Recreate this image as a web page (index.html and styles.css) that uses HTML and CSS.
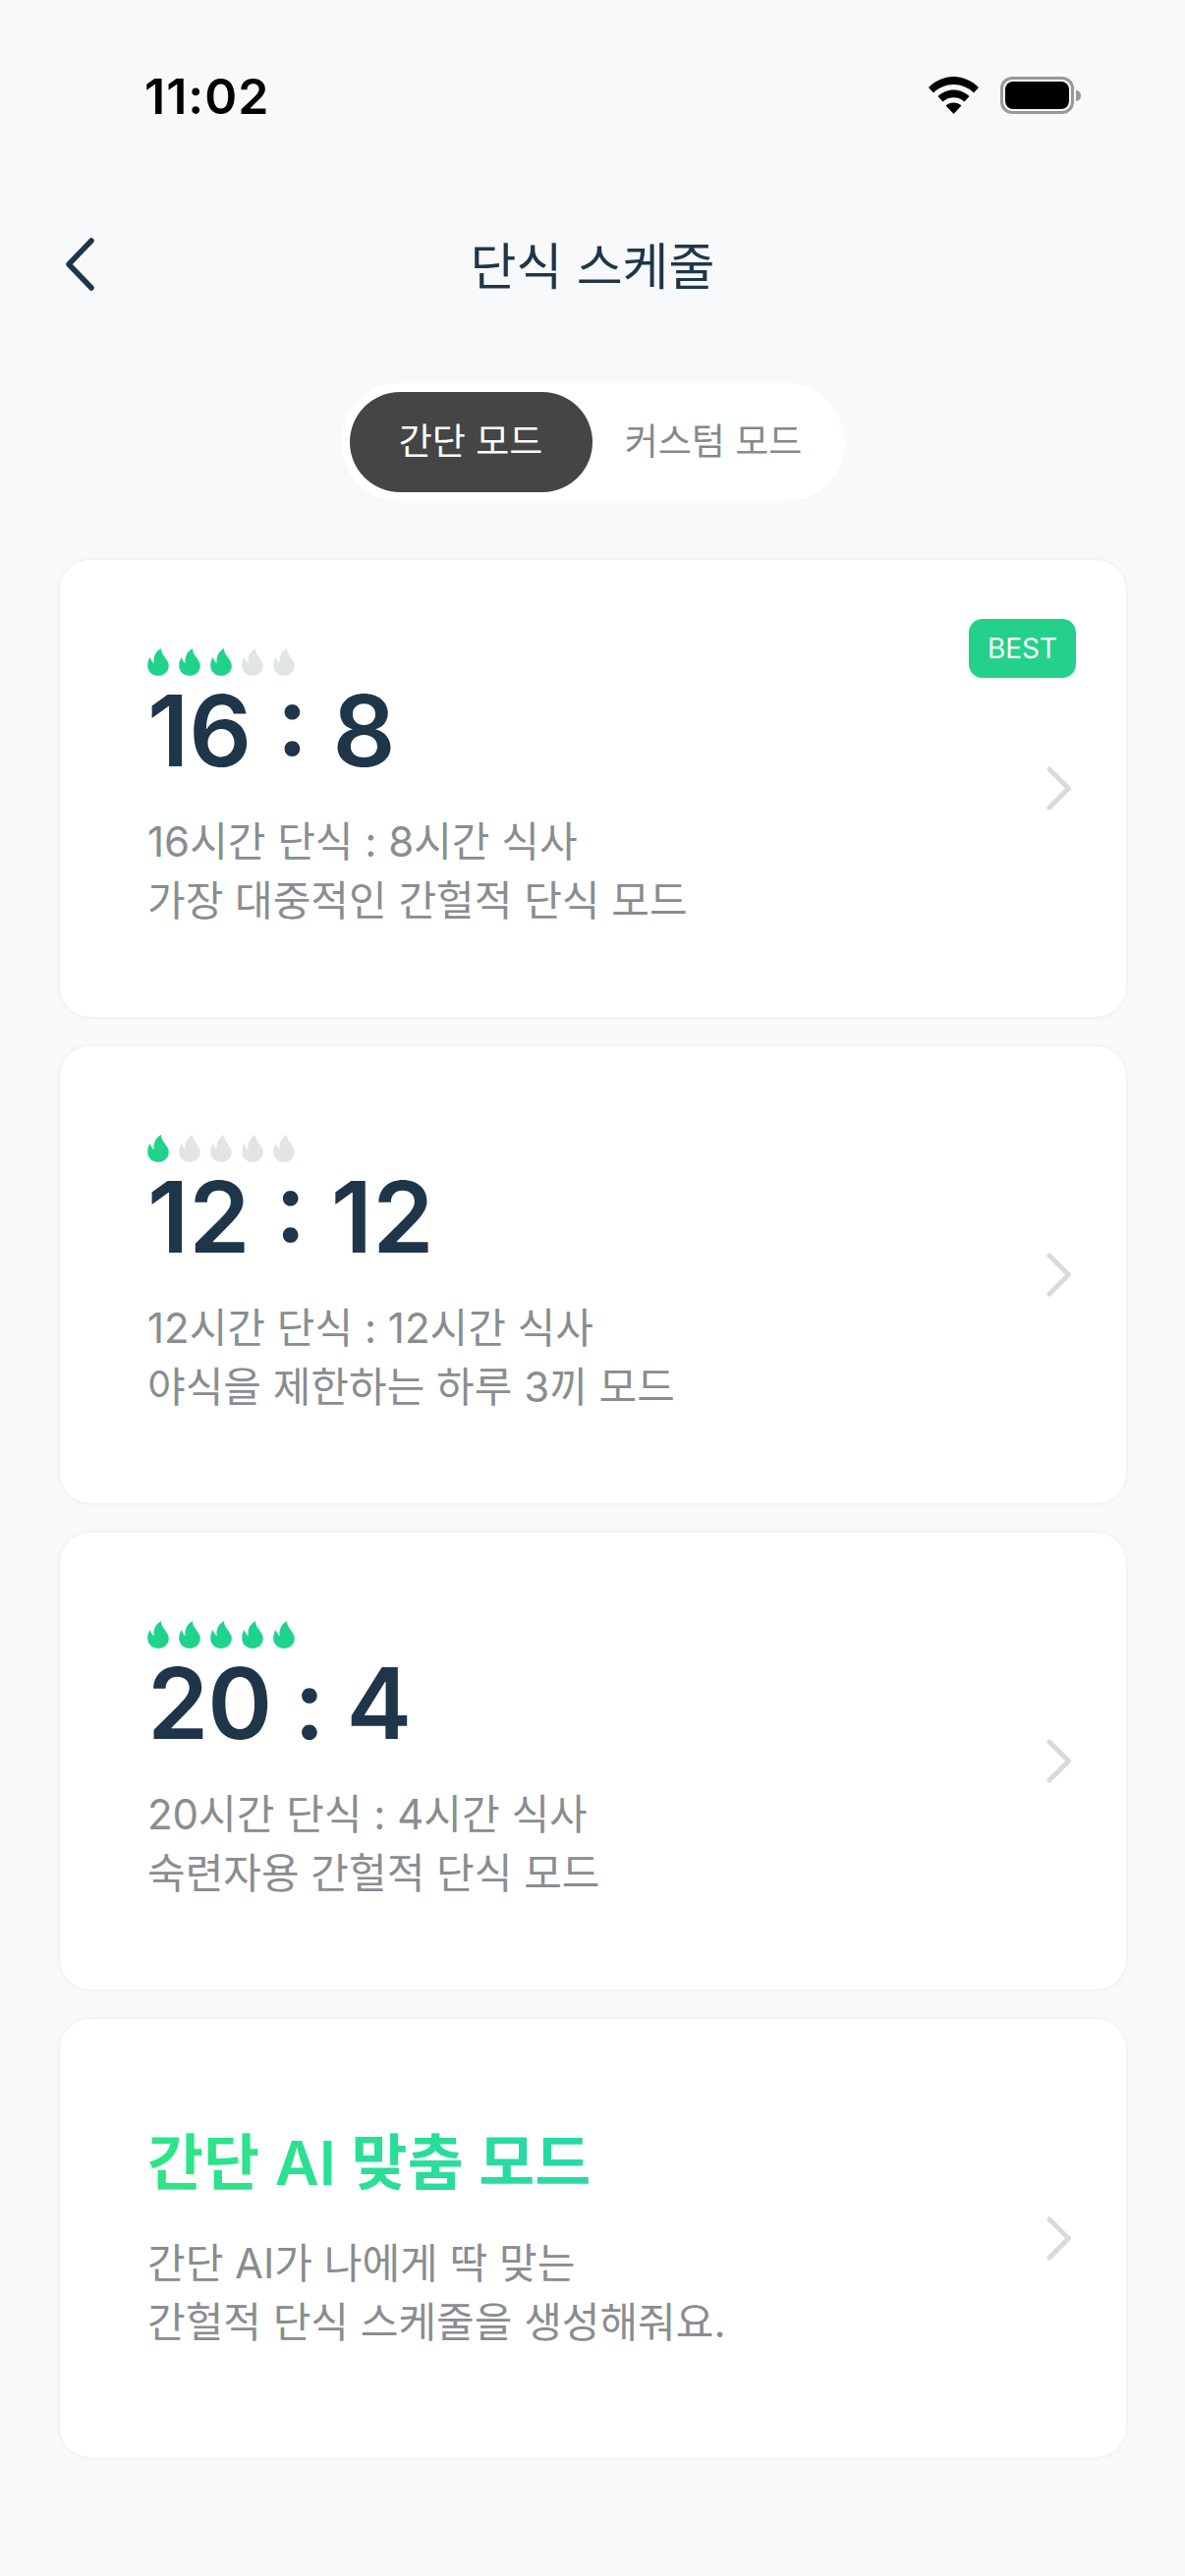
FILE: index.html
```html
<!DOCTYPE html>
<html lang="ko">
<head>
    <meta charset="UTF-8">
    <meta name="viewport" content="width=device-width, initial-scale=1.0">
    <title>단식 스케줄</title>
    <link rel="stylesheet" href="styles.css">
</head>
<body>
    <svg class="defs" width="0" height="0">
        <symbol id="flame" viewBox="0 0 22 28">
            <path d="M14 0C14 4 15.800 6 18 9.200C20.500 12.600 21.800 15 21.800 17.400C21.800 23.400 17 27.800 11 27.800C5 27.800 0.200 23.400 0.200 17.400C0.200 14.400 1 11.400 2.800 8.800C3.200 11.200 4.400 13.600 6.800 15.200C5.400 9.400 8.400 2.800 14 0Z"/>
        </symbol>
        <symbol id="chevron" viewBox="0 0 26 45">
            <path d="M3 3L22.500 22.500L3 42" fill="none" stroke="currentColor" stroke-width="5" stroke-linecap="round" stroke-linejoin="round"/>
        </symbol>
    </svg>

    <div class="status-bar">
        <span class="clock">11:02</span>
        <div class="status-icons">
            <svg class="wifi" viewBox="0 0 51 38">
                <path d="M25.500 0C35 0 44 4 51 11L46 16.500C40.500 11 33 8 25.500 8C18 8 10.500 11 5 16.500L0 11C7 4 16 0 25.500 0Z"/>
                <path d="M25.500 13.500C31.500 13.500 37 16 41.500 20L36.500 25.500C33.500 22.800 29.500 21.300 25.500 21.300C21.500 21.300 17.500 22.800 14.500 25.500L9.500 20C14 16 19.500 13.500 25.500 13.500Z"/>
                <path d="M25.500 26.500C28.500 26.500 31.300 27.500 33.500 29.500L25.500 38L17.500 29.500C19.700 27.500 22.500 26.500 25.500 26.500Z"/>
            </svg>
            <div class="battery">
                <div class="battery-body"><div class="battery-fill"></div></div>
                <div class="battery-nub"></div>
            </div>
        </div>
    </div>

    <div class="nav">
        <svg class="back" viewBox="0 0 30 54">
            <path d="M27 3L4 27L27 51" fill="none" stroke="currentColor" stroke-width="5.500" stroke-linecap="round" stroke-linejoin="round"/>
        </svg>
        <h1 class="nav-title">단식 스케줄</h1>
    </div>

    <div class="segment-wrap">
        <div class="segment">
            <div class="segment-item active">간단 모드</div>
            <div class="segment-item">커스텀 모드</div>
        </div>
    </div>

    <div class="card-list">
        <div class="card">
            <span class="badge">BEST</span>
            <div class="card-body">
                <div class="flames">
                    <svg class="flame on"><use href="#flame"/></svg>
                    <svg class="flame on"><use href="#flame"/></svg>
                    <svg class="flame on"><use href="#flame"/></svg>
                    <svg class="flame"><use href="#flame"/></svg>
                    <svg class="flame"><use href="#flame"/></svg>
                </div>
                <div class="ratio">16 : 8</div>
                <p class="desc">16시간 단식 : 8시간 식사<br>가장 대중적인 간헐적 단식 모드</p>
            </div>
            <svg class="chevron"><use href="#chevron"/></svg>
        </div>

        <div class="card">
            <div class="card-body">
                <div class="flames">
                    <svg class="flame on"><use href="#flame"/></svg>
                    <svg class="flame"><use href="#flame"/></svg>
                    <svg class="flame"><use href="#flame"/></svg>
                    <svg class="flame"><use href="#flame"/></svg>
                    <svg class="flame"><use href="#flame"/></svg>
                </div>
                <div class="ratio">12 : 12</div>
                <p class="desc">12시간 단식 : 12시간 식사<br>야식을 제한하는 하루 3끼 모드</p>
            </div>
            <svg class="chevron"><use href="#chevron"/></svg>
        </div>

        <div class="card">
            <div class="card-body">
                <div class="flames">
                    <svg class="flame on"><use href="#flame"/></svg>
                    <svg class="flame on"><use href="#flame"/></svg>
                    <svg class="flame on"><use href="#flame"/></svg>
                    <svg class="flame on"><use href="#flame"/></svg>
                    <svg class="flame on"><use href="#flame"/></svg>
                </div>
                <div class="ratio ratio-tight">20 : 4</div>
                <p class="desc">20시간 단식 : 4시간 식사<br>숙련자용 간헐적 단식 모드</p>
            </div>
            <svg class="chevron"><use href="#chevron"/></svg>
        </div>

        <div class="card card-ai">
            <div class="card-body">
                <div class="ai-title">간단 AI 맞춤 모드</div>
                <p class="desc">간단 AI가 나에게 딱 맞는<br>간헐적 단식 스케줄을 생성해줘요.</p>
            </div>
            <svg class="chevron"><use href="#chevron"/></svg>
        </div>
    </div>
</body>
</html>
```

FILE: styles.css
```css
body {
    font-family: Inter, "Noto Sans CJK KR", sans-serif;
    margin: 0;
    width: 1206px;
    height: 2622px;
    overflow: hidden;
    background-color: #f8f9fb;
}
.defs {
    position: absolute;
}

/* status bar */
.status-bar {
    display: flex;
    justify-content: space-between;
    align-items: center;
    height: 38px;
    padding: 78px 106px 0 147px;
}
.clock {
    margin-top: 2px;
    font-size: 50px;
    font-weight: 600;
    letter-spacing: 1px;
    color: #000;
}
.status-icons {
    display: flex;
    align-items: center;
    gap: 22px;
}
.wifi {
    width: 51px;
    height: 38px;
}
.battery {
    display: flex;
    align-items: center;
    gap: 2px;
}
.battery-body {
    box-sizing: border-box;
    width: 75px;
    height: 38px;
    padding: 2px;
    border: 3px solid #999;
    border-radius: 12px;
}
.battery-fill {
    height: 100%;
    background-color: #000;
    border-radius: 8px;
}
.battery-nub {
    width: 5px;
    height: 11px;
    background-color: #999;
    border-radius: 0 5px 5px 0;
}

/* nav */
.nav {
    position: relative;
    display: flex;
    justify-content: center;
    align-items: center;
    height: 80px;
    margin-top: 112px;
}
.back {
    position: absolute;
    left: 66px;
    top: 14px;
    width: 30px;
    height: 54px;
    color: #1f3549;
}
.nav-title {
    margin: 0;
    font-size: 51px;
    font-weight: 400;
    color: #1f3549;
}

/* mode switch */
.segment-wrap {
    display: flex;
    justify-content: center;
    margin-top: 82px;
}
.segment {
    display: flex;
    align-items: center;
    box-sizing: border-box;
    width: 513px;
    height: 120px;
    padding: 0 10px 0 9px;
    background-color: #fff;
    border-radius: 60px;
}
.segment-item {
    flex: 1;
    font-size: 37px;
    line-height: 102px;
    text-align: center;
    color: #85898d;
}
.segment-item.active {
    flex: none;
    width: 247px;
    color: #fff;
    background-color: #454545;
    border-radius: 51px;
}

/* cards */
.card-list {
    display: flex;
    flex-direction: column;
    gap: 28px;
    margin: 59px 59px 0 60px;
}
.card {
    position: relative;
    display: flex;
    align-items: center;
    box-sizing: border-box;
    height: 467px;
    padding: 0 55px 0 89px;
    background-color: #fff;
    border: 1px solid #f1f2f4;
    border-radius: 32px;
    box-shadow: 0 0 5px rgba(0, 0, 0, 0.04);
}
.card-ai {
    height: 448px;
}
.card-body {
    flex: 1;
    align-self: flex-start;
    padding-top: 90px;
}
.card-ai .card-body {
    align-self: center;
    padding-top: 0;
}
.badge {
    position: absolute;
    top: 60px;
    right: 51px;
    width: 109px;
    height: 60px;
    line-height: 61px;
    text-align: center;
    font-size: 28px;
    color: #fff;
    background-color: #24d18b;
    border-radius: 14px;
}
.flames {
    display: flex;
    gap: 10px;
}
.flame {
    width: 22px;
    height: 28px;
    fill: #e2e5e6;
}
.flame.on {
    fill: #20d38c;
}
.ratio {
    margin-top: 11px;
    font-size: 100px;
    font-weight: 600;
    line-height: 90px;
    color: #1f3549;
}
.ratio-tight {
    letter-spacing: -1px;
    word-spacing: -1.500px;
}
.desc {
    margin: 38px 0 0;
    font-size: 42px;
    font-weight: 400;
    line-height: 60px;
    color: #898d91;
}
.card-ai .desc {
    margin-top: 32px;
}
.ai-title {
    width: fit-content;
    font-size: 62px;
    font-weight: 600;
    line-height: 80px;
    color: transparent;
    background: linear-gradient(90deg, #2ee585, #27d9a6);
    background-clip: text;
    -webkit-background-clip: text;
}
.chevron {
    width: 26px;
    height: 45px;
    color: #dadada;
}
```
